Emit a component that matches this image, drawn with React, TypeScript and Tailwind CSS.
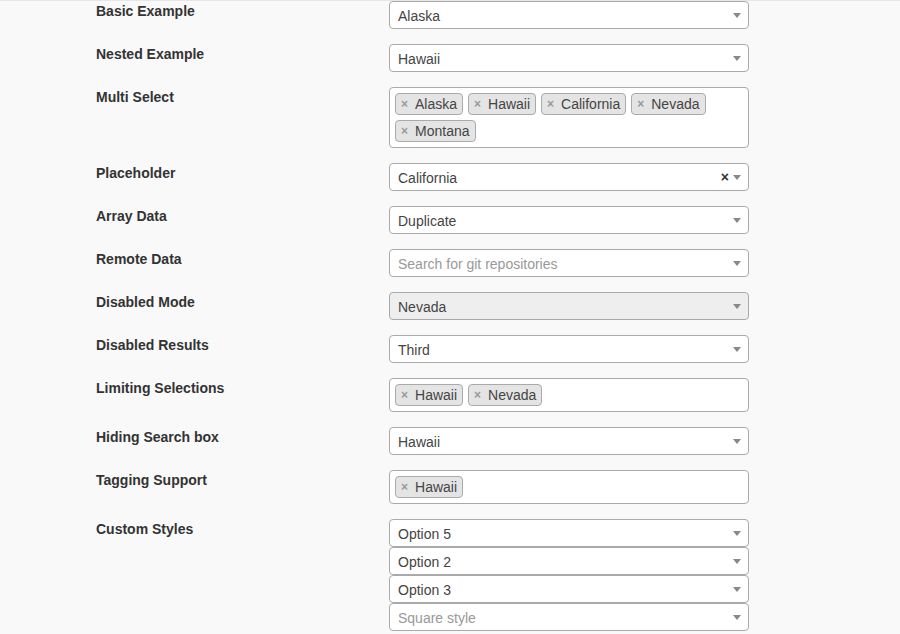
import React from 'react';

type Field =
  | { label: string; kind: 'single'; value: string; placeholder?: boolean; disabled?: boolean; clearable?: boolean }
  | { label: string; kind: 'multi'; tags: string[] }
  | { label: string; kind: 'stack'; items: { value: string; placeholder?: boolean }[] };

const fields: Field[] = [
  { label: 'Basic Example', kind: 'single', value: 'Alaska' },
  { label: 'Nested Example', kind: 'single', value: 'Hawaii' },
  { label: 'Multi Select', kind: 'multi', tags: ['Alaska', 'Hawaii', 'California', 'Nevada', 'Montana'] },
  { label: 'Placeholder', kind: 'single', value: 'California', clearable: true },
  { label: 'Array Data', kind: 'single', value: 'Duplicate' },
  { label: 'Remote Data', kind: 'single', value: 'Search for git repositories', placeholder: true },
  { label: 'Disabled Mode', kind: 'single', value: 'Nevada', disabled: true },
  { label: 'Disabled Results', kind: 'single', value: 'Third' },
  { label: 'Limiting Selections', kind: 'multi', tags: ['Hawaii', 'Nevada'] },
  { label: 'Hiding Search box', kind: 'single', value: 'Hawaii' },
  { label: 'Tagging Support', kind: 'multi', tags: ['Hawaii'] },
  {
    label: 'Custom Styles',
    kind: 'stack',
    items: [
      { value: 'Option 5' },
      { value: 'Option 2' },
      { value: 'Option 3' },
      { value: 'Square style', placeholder: true },
    ],
  },
];

function Arrow() {
  return (
    <span className="flex w-5 shrink-0 items-center justify-center">
      <span className="h-0 w-0 border-x-[4px] border-t-[5px] border-x-transparent border-t-[#888]" />
    </span>
  );
}

function SingleBox({
  value,
  placeholder,
  disabled,
  clearable,
}: {
  value: string;
  placeholder?: boolean;
  disabled?: boolean;
  clearable?: boolean;
}) {
  return (
    <div
      className={`flex h-[28px] items-center rounded border border-[#aaa] pl-2 pr-px ${
        disabled ? 'bg-[#eee]' : 'bg-white'
      }`}
    >
      <span className={`flex-1 truncate pt-px leading-[26px] ${placeholder ? 'text-[#999]' : 'text-[#444]'}`}>
        {value}
      </span>
      {clearable && <span className="mr-[-2px] text-[14px] font-bold text-[#333]">×</span>}
      <Arrow />
    </div>
  );
}

function MultiBox({ tags }: { tags: string[] }) {
  return (
    <div className="flex flex-wrap gap-[5px] rounded border border-[#aaa] bg-white p-[5px]">
      {tags.map((t) => (
        <span
          key={t}
          className="flex h-[22px] items-center rounded border border-[#aaa] bg-[#e4e4e4] px-[5px] leading-5 text-[#444]"
        >
          <span className="mr-[7px] text-[12px] font-bold text-[#999]">×</span>
          {t}
        </span>
      ))}
    </div>
  );
}

export default function App() {
  return (
    <div className="min-h-[634px] border-t border-[#e6e6e6] bg-[#f9f9f9] font-['Liberation_Sans',Arial,sans-serif] text-[14px]">
      <div className="grid grid-cols-[293px_360px] gap-y-[15px] pl-[96px]">
        {fields.map((f) => (
          <React.Fragment key={f.label}>
            <div className="text-[14px] font-bold leading-5 text-[#333]">{f.label}</div>
            <div>
              {f.kind === 'single' && (
                <SingleBox
                  value={f.value}
                  placeholder={f.placeholder}
                  disabled={f.disabled}
                  clearable={f.clearable}
                />
              )}
              {f.kind === 'multi' && <MultiBox tags={f.tags} />}
              {f.kind === 'stack' && (
                <div className="flex flex-col">
                  {f.items.map((it) => (
                    <SingleBox key={it.value} value={it.value} placeholder={it.placeholder} />
                  ))}
                </div>
              )}
            </div>
          </React.Fragment>
        ))}
      </div>
    </div>
  );
}
